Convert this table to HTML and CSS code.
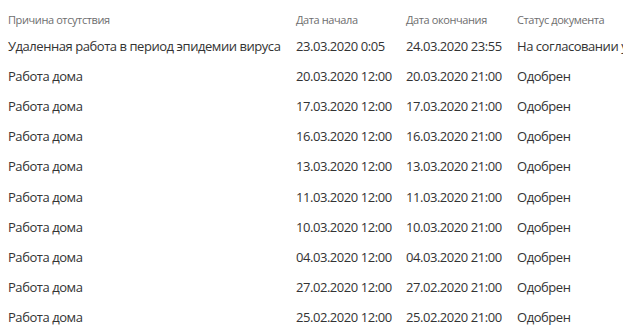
FILE: index.html
```html
<!DOCTYPE html>
<html lang="ru">
<head>
<meta charset="utf-8">
<link rel="stylesheet" href="styles.css">
</head>
<body>
<div class="table">
  <div class="row head">
    <div class="cell">Причина отсутствия</div>
    <div class="cell">Дата начала</div>
    <div class="cell">Дата окончания</div>
    <div class="cell">Статус документа</div>
  </div>
  <div class="row">
    <div class="cell">Удаленная работа в период эпидемии вируса</div>
    <div class="cell">23.03.2020 0:05</div>
    <div class="cell">24.03.2020 23:55</div>
    <div class="cell">На согласовании у руководителя</div>
  </div>
  <div class="row"><div class="cell">Работа дома</div><div class="cell">20.03.2020 12:00</div><div class="cell">20.03.2020 21:00</div><div class="cell">Одобрен</div></div>
  <div class="row"><div class="cell">Работа дома</div><div class="cell">17.03.2020 12:00</div><div class="cell">17.03.2020 21:00</div><div class="cell">Одобрен</div></div>
  <div class="row"><div class="cell">Работа дома</div><div class="cell">16.03.2020 12:00</div><div class="cell">16.03.2020 21:00</div><div class="cell">Одобрен</div></div>
  <div class="row"><div class="cell">Работа дома</div><div class="cell">13.03.2020 12:00</div><div class="cell">13.03.2020 21:00</div><div class="cell">Одобрен</div></div>
  <div class="row"><div class="cell">Работа дома</div><div class="cell">11.03.2020 12:00</div><div class="cell">11.03.2020 21:00</div><div class="cell">Одобрен</div></div>
  <div class="row"><div class="cell">Работа дома</div><div class="cell">10.03.2020 12:00</div><div class="cell">10.03.2020 21:00</div><div class="cell">Одобрен</div></div>
  <div class="row"><div class="cell">Работа дома</div><div class="cell">04.03.2020 12:00</div><div class="cell">04.03.2020 21:00</div><div class="cell">Одобрен</div></div>
  <div class="row"><div class="cell">Работа дома</div><div class="cell">27.02.2020 12:00</div><div class="cell">27.02.2020 21:00</div><div class="cell">Одобрен</div></div>
  <div class="row"><div class="cell">Работа дома</div><div class="cell">25.02.2020 12:00</div><div class="cell">25.02.2020 21:00</div><div class="cell">Одобрен</div></div>
</div>
</body>
</html>
```
FILE: styles.css
```css
html, body {
  margin: 0;
  padding: 0;
  background: #fff;
  overflow: hidden;
}
body {
  font-family: "Open Sans", "Noto Sans", sans-serif;
  color: #333;
}
.table {
  display: flex;
  flex-direction: column;
  padding: 7px 0 0 8px;
  width: max-content;
}
.row {
  display: grid;
  grid-template-columns: 288px 110px 111px max-content;
  height: 30.1px;
  align-items: center;
  font-size: 13px;
  letter-spacing: -0.45px;
  white-space: nowrap;
}
.row.head {
  height: 24px;
  font-size: 11px;
  letter-spacing: -0.4px;
  color: #6e6e6e;
}
```
